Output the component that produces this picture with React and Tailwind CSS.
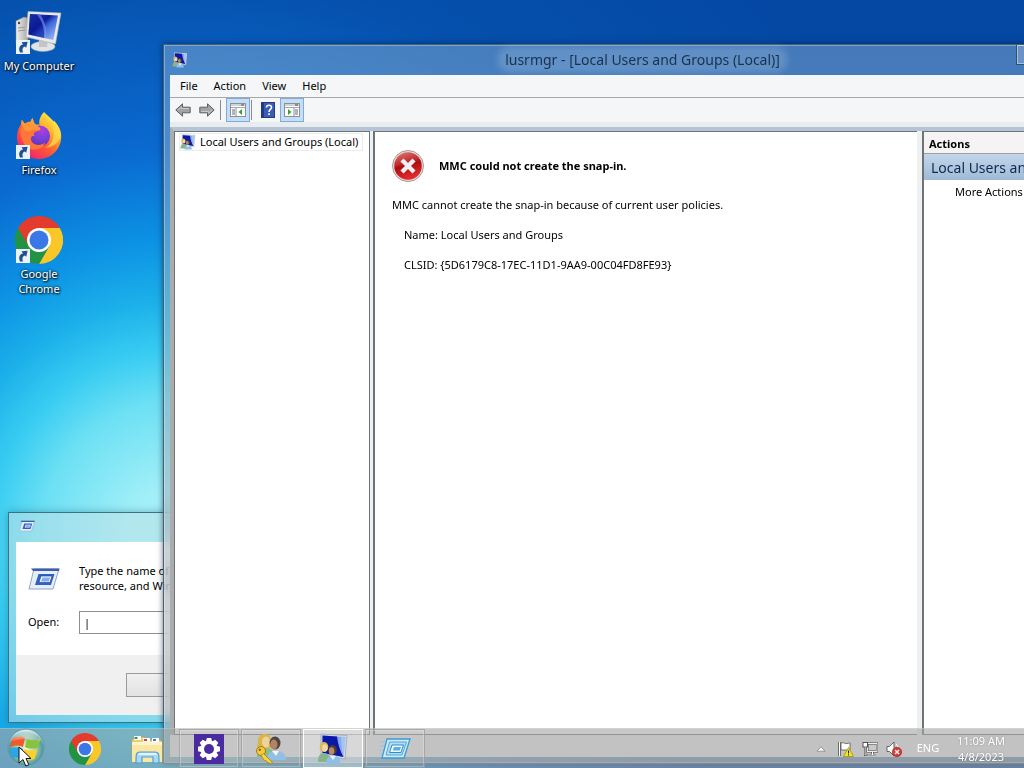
import { useState } from "react";

/* ================= ICONS ================= */
const ShortcutArrow = ({ x = 0, y = 34 }) => (
  <g transform={`translate(${x} ${y})`}>
    <rect width="14" height="14" fill="#e9f3f9" />
    <path d="M4 12.500C2 8 4 5 7 4.600L5.600 2.200l6-.4-1.400 6L8.800 6.600C6.600 7.400 5.800 9.500 7 12.500z" fill="#234e93" />
  </g>
);

const ComputerIcon = () => (
  <svg viewBox="0 0 48 48" className="size-12" aria-hidden="true">
    <defs>
      <linearGradient id="screen" x1="0" y1="0" x2="1" y2="1">
        <stop offset="0" stopColor="#2b49b8" />
        <stop offset="0.4" stopColor="#0c1c9a" />
        <stop offset="0.55" stopColor="#3f68dc" />
        <stop offset="1" stopColor="#a9cdf8" />
      </linearGradient>
      <linearGradient id="tower" x1="0" x2="1">
        <stop offset="0" stopColor="#f1f1ee" />
        <stop offset="1" stopColor="#a7a7a5" />
      </linearGradient>
    </defs>
    <path d="M1 13l8-4 4 1v25l-9 2-3-1z" fill="url(#tower)" stroke="#858585" strokeWidth="0.5" />
    <circle cx="4" cy="15" r="1.200" fill="#444" />
    <path d="M3 20l7-1M3 23l7-1" stroke="#999" />
    <ellipse cx="28" cy="38.500" rx="12" ry="5" fill="#e2e3e4" stroke="#a5a7aa" strokeWidth="0.6" />
    <path d="M24 31h9l-1 8h-8z" fill="#c3c5c8" />
    <path d="M13 3.500L46 5l-5.500 31L11 29z" fill="#e9eaea" stroke="#aeb0b2" strokeWidth="0.6" />
    <path d="M15 6l28 1.400-4.600 24.600L13.500 26.500z" fill="url(#screen)" />
    <path d="M15 6l10 .5c5 7 6 15 4 23.400L13.500 26.500z" fill="#0a1794" opacity="0.55" />
    <path d="M22 6.400c5 6 8 15 7 23.400l2 .5C32 22 30 13 25 6.500z" fill="#7f9df0" opacity="0.6" />
    <ShortcutArrow x={1} y={32} />
  </svg>
);

const FirefoxIcon = () => (
  <svg viewBox="0 0 48 48" className="size-12" aria-hidden="true">
    <defs>
      <linearGradient id="ffBody" x1="0.85" y1="0.05" x2="0.2" y2="0.95">
        <stop offset="0" stopColor="#fff14e" />
        <stop offset="0.3" stopColor="#ffb52e" />
        <stop offset="0.6" stopColor="#ff5d33" />
        <stop offset="1" stopColor="#ee1f72" />
      </linearGradient>
      <radialGradient id="ffGlobe" cx="0.6" cy="0.2" r="0.9">
        <stop offset="0" stopColor="#b03de0" />
        <stop offset="0.5" stopColor="#7a41d8" />
        <stop offset="1" stopColor="#5a2fb4" />
      </radialGradient>
    </defs>
    <path
      d="M29 0c2 3 8 7 9.500 10.500 0 0 .5-1 .3-2C43 12 46 18.500 46.200 24 46.400 37 36.500 47 24 47S1.500 37 2 24.500c.1-5 1.500-9 4-12l.8-4.500c1 1 2.200 2.300 3 3.400C11.600 10.400 14 9.500 16 9.600 16 7.600 15.800 7.500 18 6c0 3 .6 5 2.500 6.500h4C23.500 8 26 3 29 0z"
      fill="url(#ffBody)"
    />
    <circle cx="24.500" cy="24" r="10.500" fill="url(#ffGlobe)" />
    <path
      d="M5.500 16c4-5 9-6 14-3.500 3 2.500 6 3 6 5-1 2-6 1.800-6.500 3.500-.5 2 1 3 1 3-4-1-5 3-3 6 3 4 10 3.500 13 .5-2 8-14 10-20 2.500C6 28 5 21 5.500 16z"
      fill="#ff7636"
    />
    <path d="M29 0c4 7 10 9 10 21 0 7-4 13-9 15 11-1 16-9 16-14C45 13 37 8 29 0z" fill="#ffe14b" opacity="0.7" />
    <path d="M6 12l.8-4.500L10 12l6-2.500L17.500 6 20 12c2 1 5 3 5.500 5-2 2-7 0-11 2-3 2-5-1-8.500-7z" fill="#ffa03a" opacity="0.75" />
    <ShortcutArrow x={1} y={33} />
  </svg>
);

const ChromeIcon = ({ className, shortcut }) => (
  <svg viewBox="0 0 48 48" className={className} aria-hidden="true">
    <path d="M24 12h20.800A24 24 0 0 1 24 48l10.400-18z" fill="#f9c828" />
    <path d="M3.200 12A24 24 0 0 0 24 48L34.400 30 24 24z" fill="#229342" />
    <path d="M3.200 12A24 24 0 0 1 44.800 12H24L13.600 30z" fill="#e33b2e" />
    <circle cx="24" cy="24" r="12" fill="#fff" />
    <circle cx="24" cy="24" r="9.500" fill="#3b78e7" />
    {shortcut && <ShortcutArrow x={1} y={33} />}
  </svg>
);

const UsersIcon = ({ className }) => (
  <svg viewBox="0 0 32 32" className={className} aria-hidden="true">
    <path d="M4 1l26 1.500L28 26 4 22z" fill="#d7dde6" stroke="#8e97a8" strokeWidth="0.6" />
    <path d="M5.500 2.500L28.500 4 26.500 24 5.500 20z" fill="#86aaf0" />
    <path d="M5.500 2.500L20 3.500c1 8 3 14 6.500 20.500L5.500 20z" fill="#0a18a8" />
    <path d="M24 4c0 7 1 14 2.500 19.800l2-11V4.200z" fill="#b4cdf7" opacity="0.7" />
    <ellipse cx="7" cy="14" rx="4.300" ry="5" fill="#dcb658" />
    <ellipse cx="7.800" cy="15" rx="2.700" ry="3.700" fill="#f3d7a8" />
    <path d="M1 29c0-6 2-9 6-9s7 3 7 9z" fill="#87b58a" />
    <ellipse cx="15.500" cy="17" rx="4.300" ry="5" fill="#4f3b2c" />
    <ellipse cx="14.600" cy="18" rx="2.800" ry="3.800" fill="#b98a68" />
    <path d="M9 31c0-6 2.500-8.500 7-8.500s7.500 2.500 7.500 8.500z" fill="#8fbfe6" />
    <path d="M13 23l3 4 3-4z" fill="#e9f3fb" />
  </svg>
);

const AccountsIcon = () => (
  <svg viewBox="0 0 32 32" className="size-8" aria-hidden="true">
    <path d="M3 8c0-5 3-7 7-7s6 3 6 7l1 7H2z" fill="#d9b64a" />
    <ellipse cx="11" cy="9" rx="4" ry="5.500" fill="#f1d29c" />
    <path d="M2 24c0-6 3-9 9-9s8 3 8 9z" fill="#8cbb8c" />
    <ellipse cx="20" cy="10" rx="5.500" ry="6.500" fill="#4d4440" />
    <ellipse cx="18.800" cy="11.500" rx="3.700" ry="5" fill="#b08563" />
    <path d="M12 27c0-6 3-9 9-9s10 3 10 9z" fill="#93bfe2" />
    <path d="M17 18l4 5 3-5z" fill="#eef5fb" />
    <circle cx="6" cy="18" r="4.500" fill="#f5c93b" stroke="#a57b12" />
    <circle cx="4.800" cy="16.800" r="1.200" fill="#8a6a1a" />
    <path d="M8.500 20.500l9 9-2.500 1.500-1.500-2-1.500.5-1-2-1.500.3L6 22.500z" fill="#f8d23e" stroke="#a57b12" strokeWidth="0.7" />
  </svg>
);

const RunIcon = ({ className }) => (
  <svg viewBox="0 0 32 24" className={className} aria-hidden="true">
    <path d="M6 2h25l-6 20H1z" fill="#e6eefa" stroke="#93a4c4" />
    <path d="M3 1.500h28.500L31 4H5z" fill="#3c5fa8" />
    <path d="M10.500 7h16l-3.500 11H7z" fill="#2f62c4" />
    <path d="M13 9h11l-2 6.500H11z" fill="#eaf2ff" stroke="#1a3f98" strokeWidth="0.6" />
    <path d="M14.500 10.500h7.500l-1.200 4h-7.600z" fill="#86aeea" />
  </svg>
);

const RunTaskIcon = () => (
  <svg viewBox="0 0 32 24" className="h-6 w-8" aria-hidden="true">
    <path d="M8 2h23l-6 19H3z" fill="#cfeaf8" stroke="#3c9bd0" strokeWidth="1.300" />
    <path d="M10.500 5h17L23 18H7z" fill="#b4dcf1" stroke="#4ea9da" />
    <path d="M13 8h11.500l-2.500 7.500H10.500z" fill="#eef8fd" stroke="#2f8cc6" />
    <path d="M15 10h7l-1.200 3.500h-7z" fill="#58b0de" />
    <path d="M1 5h6M0 9h5M0 13h4M0 17h3" stroke="#8cc8e8" strokeWidth="0.8" />
  </svg>
);

const GearIcon = () => (
  <svg viewBox="0 0 30 30" className="size-[30px] bg-[#4a2ca0]" aria-hidden="true">
    <g fill="#fff" transform="translate(15 15)">
      {[0, 45, 90, 135, 180, 225, 270, 315].map((deg) => (
        <path key={deg} d="M-2.200-11h4.400l1 4h-6.400z" transform={`rotate(${deg})`} />
      ))}
      <circle r="8.300" />
      <circle r="5" fill="#4a2ca0" />
    </g>
  </svg>
);

const ExplorerIcon = () => (
  <svg viewBox="0 0 32 32" className="size-8" aria-hidden="true">
    <path d="M1 6h3l1-2h8l1 3h16l1 2v19H1z" fill="#ecce72" stroke="#c39c3e" strokeWidth="0.6" />
    <path d="M3 3h7v4H3z" fill="#fff" />
    <path d="M3.500 4h3v2h-3z" fill="#2d9e4a" />
    <path d="M12 5h7v4h-7z" fill="#fff" />
    <path d="M13 6h3v2h-3z" fill="#d8452f" />
    <path d="M21 5h7v4h-7z" fill="#fff" />
    <path d="M22 6h3v2h-3z" fill="#3a7fd0" />
    <path d="M1 9h30v20H1z" fill="#fae7a2" />
    <path d="M1 9h30v3H1z" fill="#fdf4cc" />
    <path d="M5 30c0-9 0-11 4-11h15c4 0 4 2 4 11h-6v-6H11v6z" fill="#a9d8f5" stroke="#4f9fd4" strokeWidth="1.200" />
    <path d="M7 22c0-1.500 1-2 3-2h13c2 0 3 .5 3 2z" fill="#e4f4fd" />
  </svg>
);

const StartOrb = () => (
  <svg viewBox="0 0 40 40" className="size-10 overflow-visible" aria-hidden="true">
    <defs>
      <radialGradient id="orb" cx="0.5" cy="0.55" r="0.52">
        <stop offset="0" stopColor="#fff9c8" />
        <stop offset="0.55" stopColor="#9cc9a4" />
        <stop offset="0.9" stopColor="#4f9aa0" />
        <stop offset="1" stopColor="#a9d6d8" />
      </radialGradient>
      <linearGradient id="orbShine" x1="0" y1="0" x2="0" y2="1">
        <stop offset="0" stopColor="#fff" stopOpacity="0.7" />
        <stop offset="1" stopColor="#fff" stopOpacity="0.1" />
      </linearGradient>
    </defs>
    <circle cx="20" cy="18" r="18" fill="url(#orb)" stroke="#5c8f99" strokeWidth="0.8" />
    <path d="M6 10c4-3 9-3 13-1l-2 9c-4-2-9-2-13 0z" fill="#f0592a" />
    <path d="M21 10c4 2 9 2 14-1l-3 9c-4 2-9 2-13 0z" fill="#86c440" />
    <path d="M4 20c4-2 9-2 13 0l-3 10c-3-2-6-2-9-1z" fill="#2ea3e6" />
    <path d="M18.500 20c4 2 9 2 13 0l-3 10c-4 2-9 1-12-.5z" fill="#fdd02f" />
    <path d="M4 13C8 3 15 1 20 1s12 2 16 12c-9-4-22-4-32 0z" fill="url(#orbShine)" />
  </svg>
);

const ErrorIcon = () => (
  <svg viewBox="0 0 32 32" className="size-8 shrink-0" aria-hidden="true">
    <defs>
      <linearGradient id="err" x1="0" y1="0" x2="0.3" y2="1">
        <stop offset="0" stopColor="#d98080" />
        <stop offset="0.45" stopColor="#c32a2a" />
        <stop offset="0.55" stopColor="#a80f12" />
        <stop offset="1" stopColor="#e02a2c" />
      </linearGradient>
    </defs>
    <circle cx="16" cy="16" r="15.500" fill="#e8dcd8" stroke="#9d7f7c" strokeWidth="0.8" />
    <circle cx="16" cy="16" r="13.800" fill="url(#err)" />
    <path d="M10 10l12 12M22 10L10 22" stroke="#f1eef4" strokeWidth="4.400" />
  </svg>
);

const ArrowIcon = ({ flip }) => (
  <svg viewBox="0 0 16 14" className={flip ? "h-3.5 w-4 rotate-180" : "h-3.5 w-4"} aria-hidden="true">
    <path d="M.8 7L7.500.8v3.400h7.700v5.600H7.500v3.400z" fill="#a3a3a3" stroke="#5f5f5f" />
    <path d="M3 7l3.500-3v1.500H14" fill="none" stroke="#c9c9c9" />
  </svg>
);

const PaneIcon = ({ flip }) => (
  <svg viewBox="0 0 16 14" className="h-3.5 w-4" aria-hidden="true">
    <rect x="0.500" y="0.500" width="15" height="13" fill="#fff" stroke="#8b9096" />
    <path d="M1 2h14M1 4.500h14" stroke="#8b9096" strokeWidth="0.8" />
    <path d="M11 2h3" stroke="#445" />
    <g transform={flip ? "translate(16 0) scale(-1 1)" : undefined}>
      <path d="M6 5v9" stroke="#8b9096" />
      <path d="M2 7h3M2 9h3M2 11h3" stroke="#5a6f86" />
      <path d="M12 6v6L8.500 9z" fill="#35a42c" />
    </g>
  </svg>
);

const HelpIcon = () => (
  <svg viewBox="0 0 14 16" className="h-4 w-3.5" aria-hidden="true">
    <rect x="0.500" y="0.500" width="13" height="15" fill="#3a5cb8" stroke="#25397c" />
    <path d="M1 1h2v14H1z" fill="#223a86" />
    <path d="M5.500 5.500C5.500 2.500 10.500 2.500 10.500 5.500 10.500 7.500 8 7.500 8 10" fill="none" stroke="#fff" strokeWidth="1.600" />
    <rect x="7.200" y="11.300" width="1.700" height="1.700" fill="#fff" />
  </svg>
);

const FlagIcon = () => (
  <svg viewBox="0 0 16 16" className="size-4" aria-hidden="true">
    <path d="M1.500 1v14" stroke="#444" strokeWidth="2.600" />
    <path d="M1.500 1v14" stroke="#fff" strokeWidth="1.200" />
    <path d="M3 2c3-1 4 1 6 .5s2-.5 3-.5v7H3z" fill="#fff" stroke="#555" strokeWidth="0.8" />
    <path d="M10.500 6.500l5 9h-10z" fill="#f6e611" stroke="#8f8a14" strokeWidth="0.7" />
    <path d="M10.500 9.500v3M10.500 13.300v1.200" stroke="#222" />
  </svg>
);

const NetworkIcon = () => (
  <svg viewBox="0 0 16 16" className="size-4" aria-hidden="true">
    <rect x="5.500" y="2.500" width="9.500" height="8" fill="#c9c9c9" stroke="#4a4a4a" strokeWidth="2" />
    <rect x="5.500" y="2.500" width="9.500" height="8" fill="none" stroke="#fff" strokeWidth="0.9" />
    <path d="M7 14h7M10.500 11v3" stroke="#444" strokeWidth="2.200" />
    <path d="M7 14h7M10.500 11v3" stroke="#fff" />
    <rect x="1" y="1.500" width="4.500" height="4.500" fill="#fff" stroke="#444" strokeWidth="0.9" />
    <path d="M3.200 6v8h3" fill="none" stroke="#444" strokeWidth="2" />
    <path d="M3.200 6v8h3" fill="none" stroke="#fff" strokeWidth="0.8" />
  </svg>
);

const SoundIcon = () => (
  <svg viewBox="0 0 16 16" className="size-4" aria-hidden="true">
    <path d="M1 5.500h2.500L8 1v14l-4.500-4.500H1z" fill="#fff" stroke="#555" strokeWidth="0.9" />
    <path d="M10 3c2 2 2.500 4 2.500 5" fill="none" stroke="#fff" />
    <circle cx="11" cy="11" r="4.700" fill="#d93a34" stroke="#8f1d1a" strokeWidth="0.6" />
    <path d="M9 9l4 4M13 9l-4 4" stroke="#fff" strokeWidth="1.400" />
  </svg>
);

/* ================= DATA ================= */
const shortcuts = [
  { name: "My Computer", icon: <ComputerIcon /> },
  { name: "Firefox", icon: <FirefoxIcon /> },
  { name: "Google Chrome", icon: <ChromeIcon className="size-12" shortcut /> },
];

const menus = ["File", "Action", "View", "Help"];

const pinned = [
  { name: "Google Chrome", icon: <ChromeIcon className="size-8" /> },
  { name: "File Explorer", icon: <ExplorerIcon /> },
];

const tasks = [
  { name: "Settings", icon: <GearIcon /> },
  { name: "User Accounts", icon: <AccountsIcon /> },
  { name: "lusrmgr", icon: <UsersIcon className="size-8" />, active: true },
  { name: "Run", icon: <RunTaskIcon /> },
];

/* ================= RUN DIALOG ================= */
const RunDialog = () => {
  const [command, setCommand] = useState("|");

  return (
    <section
      aria-label="Run"
      className="absolute bottom-[45px] left-2 flex w-[412px] flex-col border border-[#3a7484] bg-[#bfe0e6]/55 px-[7px] pb-[7px] shadow-[0_0_8px_rgba(0,60,90,0.35)]"
    >
      <header className="flex h-[29px] items-center pb-1 pl-[3px]">
        <RunIcon className="h-3 w-4" />
      </header>
      <div className="h-[113px] bg-white px-3 pt-[21px]">
        <div className="flex items-start gap-[19px]">
          <RunIcon className="mt-1 h-6 w-8 shrink-0" />
          <p className="leading-[15px]">
            Type the name of a program, folder, document, or Internet resource, and Windows will open it for you.
          </p>
        </div>
        <div className="mt-[18px] flex items-center">
          <label htmlFor="open" className="w-[51px]">Open:</label>
          <input
            id="open"
            value={command}
            onChange={(e) => setCommand(e.target.value)}
            className="h-[23px] flex-1 border border-[#8f8f8f] bg-white px-1 outline-none"
          />
        </div>
      </div>
      <footer className="flex h-[60px] items-center gap-2 bg-[#f0f0f0] pl-[110px]">
        <button aria-label="OK" className="h-6 w-[82px] border border-[#9a9a9a] bg-linear-to-b from-[#f0f0f0] to-[#e2e2e2]" />
      </footer>
    </section>
  );
};

/* ================= CONSOLE WINDOW ================= */
const ConsoleWindow = () => (
  <section
    aria-label="lusrmgr"
    className="absolute top-11 -right-24 bottom-1 left-[163px] flex flex-col border border-[#46606f] bg-linear-to-b from-[#86acd0]/50 to-[#b0b3b3]/60 px-1.5 pb-1.5 shadow-[0_0_6px_rgba(0,20,50,0.6),inset_0_0_0_1px_rgba(255,255,255,0.3)] backdrop-blur-sm"
  >
    <header className="relative flex h-[30px] items-center pb-px pl-0.5">
      <UsersIcon className="size-4" />
      <h1 className="flex-1 pr-4 text-center text-sm text-[#173350]">
        <span className="rounded-full bg-white/15 px-1 shadow-[0_0_6px_4px_rgba(255,255,255,0.15)]">
          lusrmgr - [Local Users and Groups (Local)]
        </span>
      </h1>
      <button aria-label="Minimize" className="absolute top-0 right-[69px] h-5 w-7 border border-t-0 border-[#33506f] bg-white/20 shadow-[inset_0_0_0_1px_rgba(255,255,255,0.4)]" />
    </header>

    <nav className="flex h-[23px] items-center border-b border-[#a6a9ab] bg-[#f4f6f8] pl-0.5">
      {menus.map((menu) => (
        <button key={menu} className="px-2">{menu}</button>
      ))}
    </nav>

    <div className="flex h-[29px] items-center border-b-[5px] border-[#e9ecee] bg-[#f4f6f8] pl-px">
      <button aria-label="Back" className="grid size-6 place-items-center"><ArrowIcon /></button>
      <button aria-label="Forward" className="grid size-6 place-items-center"><ArrowIcon flip /></button>
      <span className="mr-[5px] ml-px h-5 w-px bg-[#8a8d90]" />
      <button aria-label="Show console tree" className="grid size-6 place-items-center border border-[#7fabdc] bg-[#c6def5]"><PaneIcon /></button>
      <span className="mr-1 ml-px h-5 w-px bg-[#8a8d90]" />
      <button aria-label="Help" className="grid size-6 place-items-center"><HelpIcon /></button>
      <button aria-label="Show action pane" className="grid size-6 place-items-center border border-[#7fabdc] bg-[#c6def5]"><PaneIcon flip /></button>
    </div>

    <div className="flex min-h-0 flex-1 border-t-4 border-l-4 border-t-[#b5c5d5] border-l-[#a9adad] bg-[#eef0f2]">
      <aside className="w-[196px] border border-[#6d7378] bg-white px-1 py-px">
        <button className="flex items-center gap-1 border border-[#ececec] pr-1">
          <UsersIcon className="size-4" />
          <span className="leading-4 whitespace-nowrap">Local Users and Groups (Local)</span>
        </button>
      </aside>

      <main className="ml-[3px] w-[544px] border-y border-l-2 border-[#6d7378] bg-white px-[17px] pt-[18px]">
        <div className="flex items-center gap-[15px]">
          <ErrorIcon />
          <h2 className="font-bold">MMC could not create the snap-in.</h2>
        </div>
        <div className="mt-4 flex flex-col gap-4 leading-[14px]">
          <p>MMC cannot create the snap-in because of current user policies.</p>
          <p className="pl-3">Name: Local Users and Groups</p>
          <p className="pl-3">CLSID: {"{5D6179C8-17EC-11D1-9AA9-00C04FD8FE93}"}</p>
        </div>
      </main>

      <aside className="ml-[5px] min-w-0 flex-1 border-y border-l-2 border-[#6d7378] bg-white">
        <h2 className="h-[22px] border-b border-[#a0a0a0] bg-[#f5f3f4] pl-[5px] leading-[23px] font-bold">Actions</h2>
        <h3 className="h-[26px] bg-linear-to-b from-[#c3d6ea] to-[#9fbad6] pl-[7px] text-sm leading-[28px] whitespace-nowrap text-[#10284f]">
          Local Users and Groups (Local)
        </h3>
        <button className="block pt-1 pl-[31px] leading-4">More Actions</button>
      </aside>
    </div>
    <div className="h-[22px] bg-[#eef0f2]" />
  </section>
);

/* ================= TASKBAR ================= */
const Taskbar = () => (
  <footer className="absolute inset-x-0 bottom-0 flex h-10 items-stretch border-t border-white/20 bg-[#a6a7a5]/62">
    <button aria-label="Start" className="w-[55px] pl-1.5"><StartOrb /></button>
    <div className="flex gap-0.5">
      {pinned.map((app) => (
        <button key={app.name} aria-label={app.name} className="grid w-[60px] place-items-center">{app.icon}</button>
      ))}
      {tasks.map((app) => (
        <button
          key={app.name}
          aria-label={app.name}
          className={
            app.active
              ? "grid w-[60px] place-items-center border border-white bg-white/35"
              : "grid w-[60px] place-items-center border border-[#989898]/70 bg-white/5 shadow-[inset_0_0_0_1px_rgba(255,255,255,0.25)]"
          }
        >
          {app.icon}
        </button>
      ))}
    </div>

    <div className="ml-auto flex items-center pr-[18px] text-white [text-shadow:0_0_2px_rgba(90,90,90,0.5)]">
      <button aria-label="Show hidden icons" className="mr-3">
        <svg viewBox="0 0 10 6" className="h-1.5 w-2.5" aria-hidden="true">
          <path d="M5 .8L9 5.200H1z" fill="#fff" stroke="#777" strokeWidth="0.7" />
        </svg>
      </button>
      <div className="flex gap-2">
        <FlagIcon />
        <NetworkIcon />
        <SoundIcon />
      </div>
      <button className="ml-3.5 w-6">ENG</button>
      <time className="ml-4 w-[50px] text-center leading-4 whitespace-nowrap">
        11:09 AM
        <br />
        4/8/2023
      </time>
    </div>
  </footer>
);

export default function App() {
  return (
    <div className="relative h-screen min-h-[480px] overflow-hidden bg-[radial-gradient(circle_at_180px_540px,#a4f0f8_50px,#6ce0f4_140px,#38ccf2_190px,#1cb0ea_240px,#0c92e4_300px,#0a6ad0_390px,#0550ac_570px,#0448a4_800px)] font-['Noto_Sans','Open_Sans',sans-serif] text-[11px] text-black">
      <ul className="w-[78px]">
        {shortcuts.map((item) => (
          <li key={item.name} className="h-[104px] pt-2">
            <button className="flex w-full flex-col items-center gap-0.5 leading-[15px] text-white [text-shadow:1px_1px_2px_#000,0_0_3px_#000]">
              {item.icon}
              <span className={item.name === "My Computer" ? "whitespace-nowrap" : "w-14"}>{item.name}</span>
            </button>
          </li>
        ))}
      </ul>

      <RunDialog />
      <ConsoleWindow />
      <Taskbar />

      {/* mouse pointer */}
      <svg viewBox="0 0 14 22" className="pointer-events-none absolute bottom-0 left-[18px] h-[22px] w-3.5" aria-hidden="true">
        <path d="M1 1v16l4-3.500L7.800 20l3-1.300L8 12.500h5z" fill="#fff" stroke="#111" />
      </svg>
    </div>
  );
}
